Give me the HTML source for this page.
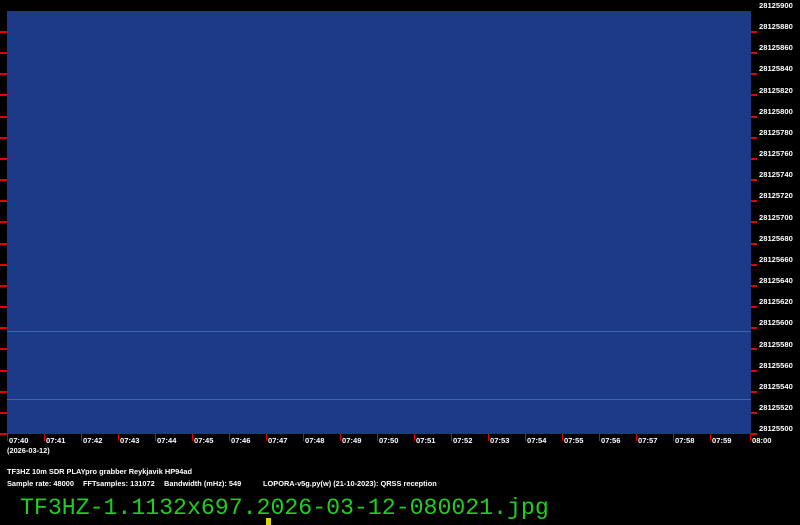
<!DOCTYPE html>
<html><head><meta charset="utf-8"><style>
body{margin:0;background:#000;width:800px;height:525px;overflow:hidden;position:relative;font-family:"Liberation Sans",sans-serif}
.r{position:absolute;left:759px;color:#fff;font-size:7.6px;font-weight:bold;line-height:10px}
.t{position:absolute;top:436px;color:#fff;font-size:7.6px;font-weight:bold;line-height:10px}
.i{position:absolute;color:#fff;font-size:7.4px;font-weight:bold;line-height:10px;white-space:pre}
</style></head><body>
<svg width="800" height="525" style="position:absolute;left:0;top:0">
<rect x="7" y="11" width="744" height="423" fill="#1d3a88"/>
<line x1="7" y1="331.5" x2="751" y2="331.5" stroke="#4a86c0" stroke-width="1" opacity="0.6"/>
<line x1="7" y1="399.5" x2="751" y2="399.5" stroke="#4a86c0" stroke-width="1" opacity="0.6"/>
<g fill="#e00000">
<rect x="0" y="31" width="7" height="2"/><rect x="751" y="31" width="6" height="2"/>
<rect x="0" y="52" width="7" height="2"/><rect x="751" y="52" width="6" height="2"/>
<rect x="0" y="73" width="7" height="2"/><rect x="751" y="73" width="6" height="2"/>
<rect x="0" y="94" width="7" height="2"/><rect x="751" y="94" width="6" height="2"/>
<rect x="0" y="116" width="7" height="2"/><rect x="751" y="116" width="6" height="2"/>
<rect x="0" y="137" width="7" height="2"/><rect x="751" y="137" width="6" height="2"/>
<rect x="0" y="158" width="7" height="2"/><rect x="751" y="158" width="6" height="2"/>
<rect x="0" y="179" width="7" height="2"/><rect x="751" y="179" width="6" height="2"/>
<rect x="0" y="200" width="7" height="2"/><rect x="751" y="200" width="6" height="2"/>
<rect x="0" y="221" width="7" height="2"/><rect x="751" y="221" width="6" height="2"/>
<rect x="0" y="243" width="7" height="2"/><rect x="751" y="243" width="6" height="2"/>
<rect x="0" y="264" width="7" height="2"/><rect x="751" y="264" width="6" height="2"/>
<rect x="0" y="285" width="7" height="2"/><rect x="751" y="285" width="6" height="2"/>
<rect x="0" y="306" width="7" height="2"/><rect x="751" y="306" width="6" height="2"/>
<rect x="0" y="327" width="7" height="2"/><rect x="751" y="327" width="6" height="2"/>
<rect x="0" y="348" width="7" height="2"/><rect x="751" y="348" width="6" height="2"/>
<rect x="0" y="370" width="7" height="2"/><rect x="751" y="370" width="6" height="2"/>
<rect x="0" y="391" width="7" height="2"/><rect x="751" y="391" width="6" height="2"/>
<rect x="0" y="412" width="7" height="2"/><rect x="751" y="412" width="6" height="2"/>
<rect x="0" y="433" width="7" height="2"/><rect x="751" y="433" width="6" height="2"/>
<rect x="7" y="434" width="1" height="7"/><rect x="44" y="434" width="1" height="7"/>
<rect x="81" y="434" width="1" height="7"/><rect x="118" y="434" width="1" height="7"/>
<rect x="155" y="434" width="1" height="7"/><rect x="192" y="434" width="1" height="7"/>
<rect x="229" y="434" width="1" height="7"/><rect x="266" y="434" width="1" height="7"/>
<rect x="303" y="434" width="1" height="7"/><rect x="340" y="434" width="1" height="7"/>
<rect x="377" y="434" width="1" height="7"/><rect x="414" y="434" width="1" height="7"/>
<rect x="451" y="434" width="1" height="7"/><rect x="488" y="434" width="1" height="7"/>
<rect x="525" y="434" width="1" height="7"/><rect x="562" y="434" width="1" height="7"/>
<rect x="599" y="434" width="1" height="7"/><rect x="636" y="434" width="1" height="7"/>
<rect x="673" y="434" width="1" height="7"/><rect x="710" y="434" width="1" height="7"/>
<rect x="750" y="434" width="1" height="7"/>
</g>
<rect x="266" y="518" width="5" height="7" fill="#d8d800"/>
</svg>
<div class="r" style="top:1px">28125900</div>
<div class="r" style="top:22px">28125880</div>
<div class="r" style="top:43px">28125860</div>
<div class="r" style="top:64px">28125840</div>
<div class="r" style="top:86px">28125820</div>
<div class="r" style="top:107px">28125800</div>
<div class="r" style="top:128px">28125780</div>
<div class="r" style="top:149px">28125760</div>
<div class="r" style="top:170px">28125740</div>
<div class="r" style="top:191px">28125720</div>
<div class="r" style="top:213px">28125700</div>
<div class="r" style="top:234px">28125680</div>
<div class="r" style="top:255px">28125660</div>
<div class="r" style="top:276px">28125640</div>
<div class="r" style="top:297px">28125620</div>
<div class="r" style="top:318px">28125600</div>
<div class="r" style="top:340px">28125580</div>
<div class="r" style="top:361px">28125560</div>
<div class="r" style="top:382px">28125540</div>
<div class="r" style="top:403px">28125520</div>
<div class="r" style="top:424px">28125500</div>
<div class="t" style="left:9px">07:40</div><div class="t" style="left:46px">07:41</div>
<div class="t" style="left:83px">07:42</div><div class="t" style="left:120px">07:43</div>
<div class="t" style="left:157px">07:44</div><div class="t" style="left:194px">07:45</div>
<div class="t" style="left:231px">07:46</div><div class="t" style="left:268px">07:47</div>
<div class="t" style="left:305px">07:48</div><div class="t" style="left:342px">07:49</div>
<div class="t" style="left:379px">07:50</div><div class="t" style="left:416px">07:51</div>
<div class="t" style="left:453px">07:52</div><div class="t" style="left:490px">07:53</div>
<div class="t" style="left:527px">07:54</div><div class="t" style="left:564px">07:55</div>
<div class="t" style="left:601px">07:56</div><div class="t" style="left:638px">07:57</div>
<div class="t" style="left:675px">07:58</div><div class="t" style="left:712px">07:59</div>
<div class="t" style="left:752px">08:00</div>
<div class="i" style="left:7px;top:446px">(2026-03-12)</div>
<div class="i" style="left:7px;top:467px">TF3HZ 10m SDR PLAYpro grabber Reykjavik HP94ad</div>
<div class="i" style="left:7px;top:479px">Sample rate: 48000</div>
<div class="i" style="left:83px;top:479px">FFTsamples: 131072</div>
<div class="i" style="left:164px;top:479px">Bandwidth (mHz): 549</div>
<div class="i" style="left:263px;top:479px">LOPORA-v5g.py(w) (21-10-2023): QRSS reception</div>
<div style="position:absolute;left:20px;top:495px;font-family:'Liberation Mono',monospace;font-size:23.2px;line-height:26px;color:#22cc22;white-space:pre">TF3HZ-1.1132x697.2026-03-12-080021.jpg</div>
</body></html>
